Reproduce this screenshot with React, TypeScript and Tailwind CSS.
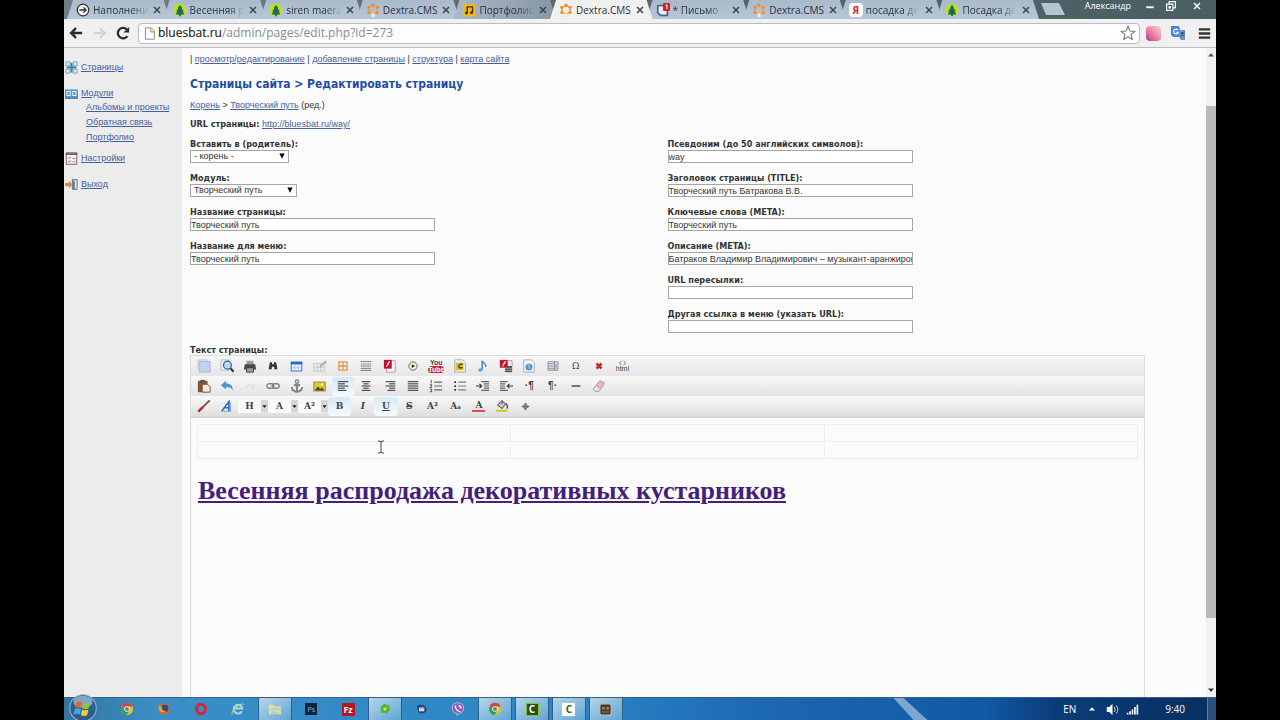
import { ReactNode } from "react";

const sans = "font-['Open_Sans','Noto_Sans',sans-serif]";
const cms = "font-['Liberation_Sans',sans-serif]";
const tahoma = "font-['DejaVu_Sans_Condensed','DejaVu_Sans',sans-serif] font-bold";

function Svg({ children, className = "size-[14px]" }: { children: ReactNode; className?: string }) {
    return (
        <svg viewBox="0 0 16 16" className={className} fill="none" aria-hidden="true">
            {children}
        </svg>
    );
}

/* ---------- favicons ---------- */

const arrowIcon = (
    <Svg>
        <circle cx="8" cy="8" r="6.6" fill="#f4f4f4" stroke="#333" strokeWidth="1.4" />
        <path d="M4 8h7M8.5 5l3 3-3 3" stroke="#333" strokeWidth="1.6" />
    </Svg>
);

const treeIcon = (
    <Svg>
        <circle cx="8" cy="8" r="7.2" fill="#c6e01e" />
        <path d="M8 2l3 4-1 .3 2.5 3.2-1.2.3L13 13H9v2H7v-2H3l1.700-3.200-1.200-.3L6 6.300 5 6z" fill="#1c7a3a" />
        <path d="M8 5l2 8H6z" fill="#1d5a8a" />
    </Svg>
);

const dextraIcon = (
    <Svg>
        <circle cx="8" cy="8" r="4.600" stroke="#f0a04a" strokeWidth="2" />
        <g fill="#ee8b2c">
            <circle cx="8" cy="2.500" r="1.800" />
            <circle cx="13" cy="5" r="1.700" />
            <circle cx="13" cy="11" r="1.700" />
            <circle cx="3" cy="11" r="1.700" />
            <circle cx="3" cy="5" r="1.700" />
        </g>
        <path d="M6 12h4v4H6z" fill="#f4e9dc" />
    </Svg>
);

const musicIcon = (
    <Svg>
        <rect x="1" y="1" width="14" height="14" rx="1" fill="#f0b91f" />
        <path d="M6 11.500V4.500h6v6" stroke="#3a2c05" strokeWidth="1.500" />
        <circle cx="5" cy="11.500" r="1.600" fill="#3a2c05" />
        <circle cx="11" cy="11" r="1.600" fill="#3a2c05" />
    </Svg>
);

const mailIcon = (
    <Svg>
        <path d="M2 3h11v11H5l-3-3z" fill="#eef2f8" stroke="#4c6690" strokeWidth="2" />
        <rect x="8" y="0" width="8" height="9" rx="1" fill="#e01b1b" />
        <path d="M12.500 2v5M12.500 2l-1.500 1" stroke="#fff" strokeWidth="1.200" />
    </Svg>
);

const yandexIcon = (
    <span className="grid size-[14px] shrink-0 place-items-center rounded-sm bg-white text-[10px] leading-none font-bold text-[#d8232a]">
        Я
    </span>
);

const tabs = [
    { title: "Наполнени", icon: arrowIcon, fade: true },
    { title: "Весенняя р", icon: treeIcon, fade: true },
    { title: "siren maera", icon: treeIcon, fade: true },
    { title: "Dextra.CMS", icon: dextraIcon },
    { title: "Портфолио", icon: musicIcon, fade: true, dim: true },
    { title: "Dextra.CMS", icon: dextraIcon, active: true },
    { title: "* Письмо -", icon: mailIcon, fade: true },
    { title: "Dextra.CMS", icon: dextraIcon },
    { title: "посадка де", icon: yandexIcon, fade: true },
    { title: "Посадка де", icon: treeIcon, fade: true },
];

function TabStrip() {
    return (
        <div className="flex h-[19px] shrink-0 bg-gradient-to-r from-[#6f7f86] via-[#55666d] to-[#4a5f63] pl-[6px]">
            <div role="tablist" className="grid w-[966px] shrink-0 grid-cols-10">
                {tabs.map((tab, i) => (
                    <div
                        key={i}
                        className={
                            "-mx-[3px] flex items-center pr-[9px] pl-[9px] [clip-path:polygon(6px_0,calc(100%-6px)_0,100%_100%,0_100%)] " +
                            (tab.active
                                ? "z-10 bg-[#f0f0f0]"
                                : tab.dim
                                  ? "bg-gradient-to-r from-[#a9b9c9] to-[#8796a5]"
                                  : "bg-gradient-to-b from-[#a9bacb] to-[#b7c7d8]")
                        }
                    >
                        <button role="tab" aria-selected={!!tab.active} className="flex flex-1 items-center gap-[3px] text-[10px] leading-[18px] whitespace-nowrap text-[#2d3239]">
                            {tab.icon}
                            <span className={tab.fade ? "[mask-image:linear-gradient(to_right,#000_70%,transparent)]" : ""}>{tab.title}</span>
                        </button>
                        <button aria-label="Закрыть вкладку">
                            <Svg className="size-[8px]">
                                <path d="M2 2l12 12M14 2L2 14" stroke="#3d444c" strokeWidth="3" />
                            </Svg>
                        </button>
                    </div>
                ))}
            </div>
            <button aria-label="Новая вкладка" className="mt-[3px] ml-[5px] h-[12px] w-[24px] shrink-0 bg-[#b3c5d3] [clip-path:polygon(0_0,18px_0,100%_100%,5px_100%)]" />
            <div className="flex h-[12px] flex-1 items-center justify-end text-white">
                <button className="mr-[14px] text-[9px] leading-[12px]">Александр</button>
                <div className="mr-[15px] flex items-center gap-[11px]">
                    <button aria-label="Свернуть">
                        <Svg className="size-[10px]"><path d="M2 10h12" stroke="#fff" strokeWidth="3" /></Svg>
                    </button>
                    <button aria-label="Окно">
                        <Svg className="size-[10px]">
                            <path d="M5 4V1h10v10h-3M1 5h10v10H1zM5 9h2v2H5z" stroke="#fff" strokeWidth="1.800" />
                        </Svg>
                    </button>
                    <button aria-label="Закрыть" className="ml-[6px]">
                        <Svg className="size-[8px]"><path d="M2 2l12 12M14 2L2 14" stroke="#fff" strokeWidth="3" /></Svg>
                    </button>
                </div>
            </div>
        </div>
    );
}

function AddressBar() {
    return (
        <div className="flex h-[29px] shrink-0 items-center border-b border-[#bdbdbd] bg-[#f0f0f0] pr-[5px] pl-[5px]">
            <button aria-label="Назад" className="mr-[10px]">
                <Svg><path d="M15 8H3M8 2.500L2.500 8 8 13.500" stroke="#2b2b2b" strokeWidth="2.800" /></Svg>
            </button>
            <button aria-label="Вперёд" disabled className="mr-[9px]">
                <Svg><path d="M1 8h12M8 2.500L13.500 8 8 13.500" stroke="#d3d3d3" strokeWidth="2.800" /></Svg>
            </button>
            <button aria-label="Обновить" className="mr-[8px]">
                <Svg>
                    <path d="M13 11.500A6 6 0 1 1 12.500 4" stroke="#2b2b2b" strokeWidth="2.600" />
                    <path d="M15 1v6.500H8.500z" fill="#2b2b2b" />
                </Svg>
            </button>
            <label className="flex h-[21px] flex-1 items-center rounded-sm border border-[#bcbcbc] bg-[#fdfdfd] pr-[3px] pl-[4px]">
                <Svg className="size-[13px]">
                    <path d="M3 1h7l4 4v10H3zM9.500 1.500V6H14" stroke="#8c8c8c" strokeWidth="1.200" />
                </Svg>
                <span className="relative ml-[2px] flex-1 text-[12px] leading-[18px]">
                    <input aria-label="Адрес" defaultValue="bluesbat.ru/admin/pages/edit.php?id=273" className="block w-full text-[#8b8b8b] outline-none" />
                    {/* the host part is drawn darker than the path */}
                    <span aria-hidden="true" className="pointer-events-none absolute top-0 left-0 text-[#333]">bluesbat.ru</span>
                </span>
                <Svg className="size-[16px]">
                    <path d="M8 1.500l2 4.500 4.800.4-3.600 3.200 1.100 4.800L8 11.800l-4.300 2.600 1.100-4.800L1.200 6.400 6 6z" stroke="#777" strokeWidth="1.100" />
                </Svg>
            </label>
            <span className="ml-[6px] size-[15px] rounded-sm bg-gradient-to-tr from-[#b4388e] via-[#ee86a8] to-[#fbd3c4]" />
            <Svg className="ml-[9px] size-[16px]">
                <path d="M1 1h8l3 11H3L1 10z" fill="#4b83d6" />
                <path d="M9 5h6v10h-4L9 12z" fill="#7193c4" />
                <path d="M8 5a2.400 2.400 0 1 0 .4 2.200H6.200" stroke="#fff" strokeWidth="1.100" />
                <path d="M10.500 8h4M12.500 7v1c0 2-1 3-2 3.500M11.500 9l2.500 2.500" stroke="#2e4a78" />
            </Svg>
            <button aria-label="Меню" className="ml-[12px]">
                <Svg className="size-[13px]"><path d="M1 3h14M1 8h14M1 13h14" stroke="#333" strokeWidth="2.800" /></Svg>
            </button>
        </div>
    );
}

/* ---------- CMS sidebar ---------- */

function SideItem({ icon, children }: { icon: ReactNode; children: string }) {
    return (
        <div className="flex h-[14px] items-center gap-[3px]">
            {icon}
            <a href="#" className="underline">{children}</a>
        </div>
    );
}

function Sidebar() {
    return (
        <nav className={`w-[118px] shrink-0 bg-[#ececec] pt-[12px] pl-px text-[9px] leading-[14px] text-[#4560a0] ${cms}`}>
            <SideItem
                icon={
                    <Svg className="size-[13px]">
                        <path d="M1 1h5v5H1zM10 1h5v5h-5zM1 10h5v5H1zM10 10h5v5h-5z" fill="#d4e6f0" stroke="#7a98a8" />
                        <path d="M8 2v12M2 8h12" stroke="#3286b4" strokeWidth="2.500" />
                    </Svg>
                }
            >
                Страницы
            </SideItem>
            <div className="mt-[12px]">
                <SideItem
                    icon={
                        <Svg className="size-[13px]">
                            <rect x="0" y="3" width="16" height="11" fill="#5596c8" />
                            <path d="M2.500 5.500h4v5h-4zM9.500 5.500h4v5h-4z" stroke="#e4f1fa" strokeWidth="1.300" />
                            <path d="M0 14h16" stroke="#35607f" />
                        </Svg>
                    }
                >
                    Модули
                </SideItem>
                <ul className="pl-[21px] leading-[15px]">
                    <li><a href="#" className="underline">Альбомы и проекты</a></li>
                    <li><a href="#" className="underline">Обратная связь</a></li>
                    <li><a href="#" className="underline">Портфолио</a></li>
                </ul>
            </div>
            <div className="mt-[6px]">
                <SideItem
                    icon={
                        <Svg className="size-[13px]">
                            <rect x="1.500" y="1" width="13" height="14" fill="#f7f2f0" stroke="#5b4f4f" />
                            <path d="M1 2.500h14" stroke="#5b4f4f" strokeWidth="2" />
                            <path d="M4 7l1 1 2-2M4 11.500l1 1 2-2" stroke="#c43a2a" strokeWidth="1.200" />
                            <path d="M9 8h4M9 12h4" stroke="#8a7d7d" />
                        </Svg>
                    }
                >
                    Настройки
                </SideItem>
            </div>
            <div className="mt-[12px]">
                <SideItem
                    icon={
                        <Svg className="size-[13px]">
                            <path d="M9 2h6v12H9z" fill="#d9e3ea" stroke="#52606c" />
                            <path d="M9 2l3 2v11l-3-2z" fill="#6b7a86" />
                            <path d="M0 6h5V3l4 5-4 5v-3H0z" fill="#e2863c" />
                        </Svg>
                    }
                >
                    Выход
                </SideItem>
            </div>
        </nav>
    );
}

/* ---------- page form ---------- */

function TextField({ id, label, value = "" }: { id: string; label: string; value?: string }) {
    return (
        <div>
            <label htmlFor={id} className={`block h-[12px] text-[#333] ${tahoma}`}>{label}</label>
            <input id={id} defaultValue={value} className="block h-[13px] w-[245px] border border-[#a5a5a5] bg-white leading-[11px] text-[#333] outline-none" />
        </div>
    );
}

function SelectField({ id, label, value, width }: { id: string; label: string; value: string; width: string }) {
    return (
        <div>
            <label htmlFor={id} className={`block h-[12px] text-[#333] ${tahoma}`}>{label}</label>
            <div className={`relative ${width}`}>
                <select id={id} className="block h-[13px] w-full appearance-none border border-[#a5a5a5] bg-white pl-[3px] leading-[11px] text-[#333]">
                    <option>{value}</option>
                </select>
                <Svg className="pointer-events-none absolute top-[3px] right-[4px] size-[6px]">
                    <path d="M1 1h14L8 15z" fill="#000" />
                </Svg>
            </div>
        </div>
    );
}

/* ---------- editor toolbar ---------- */

function lines(rows: [number, number][], color = "#555") {
    return (
        <Svg>
            {rows.map(([x1, x2], i) => (
                <path key={i} d={`M${x1} ${3 + i * 2.5}H${x2}`} stroke={color} strokeWidth="1.400" />
            ))}
        </Svg>
    );
}

const page = <path d="M2 1h9l3 3v11H2z" fill="#f5f7fa" stroke="#9aa5b5" />;

const flashIcon = (
    <Svg>
        <path d="M4 2h10v13H4z" fill="#fafafa" stroke="#c78a8a" />
        <rect x="1" y="1" width="9" height="10" fill="#c8102e" />
        <path d="M8 3C5.500 3 5.500 6 4 9M5 6h2" stroke="#fff" strokeWidth="1.200" />
    </Svg>
);

const rowOne: { name: string; icon: ReactNode }[] = [
    {
        name: "Макет",
        icon: (
            <Svg>
                <rect x="1" y="1" width="11" height="11" fill="#dbe6f6" stroke="#b9cae6" />
                <rect x="3" y="3" width="12" height="12" fill="#bfd2ee" stroke="#9db6dc" />
            </Svg>
        ),
    },
    {
        name: "Просмотр",
        icon: (
            <Svg>
                <path d="M1 1h9v12H1z" fill="#eef1f5" stroke="#b5bcc6" />
                <circle cx="8.500" cy="7" r="4.500" fill="#b8dbf2" stroke="#37618e" strokeWidth="1.400" />
                <path d="M12 10.500l3.500 4" stroke="#2c3f5c" strokeWidth="2.400" />
            </Svg>
        ),
    },
    {
        name: "Печать",
        icon: (
            <Svg>
                <path d="M4 2h8v5H4z" fill="#9a9a9a" />
                <path d="M2 6h12l1 6H1z" fill="#4a4a4a" />
                <path d="M4 10h8v5H4z" fill="#8fa2ae" stroke="#333" />
            </Svg>
        ),
    },
    {
        name: "Найти",
        icon: (
            <Svg className="size-[10px]">
                <path d="M3 2h3.500v3h3V2H13l2 11h-5V9H6v4H1z" fill="#333" />
            </Svg>
        ),
    },
    {
        name: "Таблица",
        icon: (
            <Svg className="size-[13px]">
                <rect x="1.500" y="2.500" width="13" height="11" fill="#f2f7ff" stroke="#3b76cf" strokeWidth="1.300" />
                <path d="M1 4h14" stroke="#2f68c4" strokeWidth="3" />
                <path d="M6 6v7M10 6v7M2 9.500h12" stroke="#9abbe8" />
            </Svg>
        ),
    },
    {
        name: "Свойства таблицы",
        icon: (
            <Svg>
                <path d="M1 5h12v9H1zM5 5v9M9 5v9M1 9.500h12" stroke="#c4c4c4" />
                <path d="M8 9l6-6 1.500 1.500" stroke="#aaa" strokeWidth="1.800" />
            </Svg>
        ),
    },
    { name: "Границы", icon: <Svg className="size-[12px]"><path d="M2.500 2.500h11v11h-11zM8 2v12M2 8h12" stroke="#dd9a48" strokeWidth="1.700" /></Svg> },
    {
        name: "Разрыв страницы",
        icon: (
            <Svg className="size-[12px]">
                <path d="M1 2h14M1 14h14M1 11.500h14" stroke="#777" strokeWidth="1.200" />
                <path d="M2 5h3v4H2zM6.500 5h3v4h-3zM11 5h3v4h-3z" stroke="#8a8a8a" />
            </Svg>
        ),
    },
    { name: "Flash", icon: flashIcon },
    {
        name: "Видео",
        icon: (
            <Svg className="size-[12px]">
                <circle cx="8" cy="8" r="5.500" fill="#f3f0d8" stroke="#6b6b5a" strokeWidth="1.300" />
                <path d="M6.500 5.500l4 2.500-4 2.500z" fill="#222" />
            </Svg>
        ),
    },
    {
        name: "YouTube",
        icon: (
            <span className="flex flex-col items-center text-[7px] leading-[6px] font-bold text-[#444]">
                <span>You</span>
                <span className="rounded-sm bg-[#cc2a2f] leading-[7px] text-white">Tube</span>
            </span>
        ),
    },
    {
        name: "Изображение",
        icon: (
            <Svg>
                {page}
                <rect x="3" y="4" width="9" height="9" fill="#d9c22b" />
                <path d="M11 6c-4-1-5 2-4 4h4" stroke="#4c4514" strokeWidth="1.500" />
            </Svg>
        ),
    },
    {
        name: "Музыка",
        icon: (
            <Svg>
                <path d="M7 12V2c1 3 5 3 4 7" stroke="#3f87c8" strokeWidth="1.700" />
                <ellipse cx="5" cy="12.500" rx="2.600" ry="2" fill="#5da2dc" />
            </Svg>
        ),
    },
    {
        name: "Медиа",
        icon: (
            <Svg>
                <rect x="1" y="1" width="9" height="9" fill="#c8102e" />
                <path d="M8 3C5.500 3 5.500 6 4 8.500M5 5.500h2" stroke="#fff" strokeWidth="1.200" />
                <path d="M10 2h5v6" stroke="#999" />
                <rect x="7" y="8" width="8" height="7" fill="#5b4545" />
                <path d="M7 10.500h8M7 13h8" stroke="#b9a5a5" />
            </Svg>
        ),
    },
    {
        name: "Веб-страница",
        icon: (
            <Svg>
                {page}
                <circle cx="8" cy="9" r="4" fill="#4d94cf" />
                <path d="M6 7c2-1 3 0 2 2s2 1 2 2" stroke="#cfe7b5" />
            </Svg>
        ),
    },
    {
        name: "Шаблон",
        icon: (
            <Svg className="size-[12px]">
                <path d="M1.500 2.500h13v11h-13zM10 2v12M2 5h7M2 8h7M2 11h7" stroke="#7d8294" strokeWidth="1.200" />
                <path d="M12 5v7" stroke="#9aa6ca" strokeWidth="2" />
            </Svg>
        ),
    },
    { name: "Символ", icon: <span className="font-['DejaVu_Serif',serif] text-[9px] text-[#444]">Ω</span> },
    { name: "Очистить", icon: <Svg className="size-[8px]"><path d="M3 3l10 10M13 3L3 13" stroke="#c02a35" strokeWidth="5" /></Svg> },
    {
        name: "Исходный код",
        icon: (
            <span className="flex flex-col items-center text-[7px] leading-[6px] text-[#444]">
                <Svg className="h-[6px] w-[9px]"><path d="M5 2L0 8l5 6M11 2l5 6-5 6" stroke="#555" strokeWidth="2" /></Svg>
                <span>html</span>
            </span>
        ),
    },
];

const rowTwo: { name: string; icon: ReactNode; on?: boolean }[] = [
    {
        name: "Вставить",
        icon: (
            <Svg>
                <rect x="1" y="2" width="11" height="13" rx="1" fill="#8a5334" />
                <rect x="4" y="1" width="5" height="3" fill="#555" />
                <path d="M6 6h6l3 3v6H6z" fill="#f3ede6" stroke="#6f4a35" />
            </Svg>
        ),
    },
    {
        name: "Отменить",
        icon: (
            <Svg>
                <path d="M1 7l6-5v3c5 0 8 3 7.500 8C13 10 11 9 7 9v3z" fill="#4c96cc" />
            </Svg>
        ),
    },
    { name: "Повторить", icon: <Svg><path d="M3 11c1-4 5-5 8-3M12 6v4H8.500" stroke="#dcdcdc" strokeWidth="1.600" /></Svg> },
    {
        name: "Ссылка",
        icon: (
            <Svg>
                <rect x="1" y="5.500" width="8" height="5" rx="2.500" stroke="#858585" strokeWidth="1.700" />
                <rect x="7" y="5.500" width="8" height="5" rx="2.500" stroke="#858585" strokeWidth="1.700" />
            </Svg>
        ),
    },
    {
        name: "Якорь",
        icon: (
            <Svg>
                <circle cx="8" cy="3" r="1.800" stroke="#858585" strokeWidth="1.600" />
                <path d="M8 5v9M4.500 7h7M2 9c0 4 4 5.500 6 5.500S14 13 14 9" stroke="#858585" strokeWidth="2.300" />
            </Svg>
        ),
    },
    {
        name: "Картинка",
        icon: (
            <Svg className="size-[13px]">
                <rect x="1" y="2.500" width="14" height="11" fill="#e3c72c" stroke="#8a7d38" />
                <path d="M2 13l4-5 3 3 2-2 3 4z" fill="#4f4a22" />
                <circle cx="11" cy="5.500" r="1.500" fill="#fff7c5" />
            </Svg>
        ),
    },
    { name: "По левому краю", icon: lines([[2, 14], [2, 10], [2, 14], [2, 10], [2, 12]]), on: true },
    { name: "По центру", icon: lines([[3, 13], [5, 11], [3, 13], [5, 11], [3, 13]]) },
    { name: "По правому краю", icon: lines([[3, 14], [7, 14], [3, 14], [7, 14], [5, 14]]) },
    { name: "По ширине", icon: lines([[2, 14], [2, 14], [2, 14], [2, 14], [2, 14]]) },
    {
        name: "Нумерованный список",
        icon: (
            <Svg>
                <path d="M6 3.500h9M6 8h9M6 12.500h9" stroke="#666" strokeWidth="1.300" />
                <path d="M2.500 1v4M1 6.500h2v1.500l-2 1.500h2.500M1 11.500h2v3H1" stroke="#444" />
            </Svg>
        ),
    },
    {
        name: "Маркированный список",
        icon: (
            <Svg>
                <path d="M6 3.500h9M6 8h9M6 12.500h9" stroke="#7a7a94" strokeWidth="1.300" />
                <path d="M1.500 2.500h2v2h-2zM1.500 7h2v2h-2zM1.500 11.500h2v2h-2z" fill="#333" />
            </Svg>
        ),
    },
    { name: "Увеличить отступ", icon: <Svg><path d="M6 3h9M9 5.500h6M9 8h6M9 10.500h6M6 13h9" stroke="#666" strokeWidth="1.300" /><path d="M0 8h6M4 5.500L6.500 8 4 10.500" stroke="#333" strokeWidth="1.300" /></Svg> },
    { name: "Уменьшить отступ", icon: <Svg><path d="M1 3h9M1 5.500h6M1 8h6M1 10.500h6M1 13h9" stroke="#666" strokeWidth="1.300" /><path d="M10 8h6M12 5.500L9.500 8l2.500 2.500" stroke="#333" strokeWidth="1.300" /></Svg> },
    { name: "Слева направо", icon: <span className="text-[10px] font-bold text-[#444]">·¶</span> },
    { name: "Справа налево", icon: <span className="text-[10px] font-bold text-[#444]">¶·</span> },
    { name: "Линия", icon: <Svg><path d="M3 8h10" stroke="#333" strokeWidth="1.500" /></Svg> },
    {
        name: "Ластик",
        icon: (
            <Svg>
                <path d="M1.500 11L9 2l5.500 2.500L8 14H3.500z" fill="#efb5b5" stroke="#b98d8d" />
                <path d="M1.500 11l3-3.500L10 11l-2 3H3.500z" fill="#e3e3ea" stroke="#a6a6b4" />
            </Svg>
        ),
    },
];

const serif = "font-['DejaVu_Serif',serif] text-[9px] leading-none text-[#444]";

const rowThree: { name: string; icon: ReactNode; on?: boolean }[] = [
    { name: "Полужирный", icon: <b className={serif}>B</b>, on: true },
    { name: "Курсив", icon: <i className={`${serif} font-bold`}>I</i> },
    { name: "Подчёркнутый", icon: <span className={`${serif} font-bold underline`}>U</span>, on: true },
    { name: "Зачёркнутый", icon: <span className={`${serif} font-bold line-through`}>S</span> },
    { name: "Верхний индекс", icon: <span className={`${serif} font-bold`}>A²</span> },
    { name: "Регистр", icon: <span className={`${serif} font-bold`}>Aₐ</span> },
    { name: "Цвет текста", icon: <span className={`${serif} border-b-2 border-[#e04a6a] px-[3px] font-bold`}>A</span> },
    {
        name: "Цвет фона",
        icon: (
            <Svg>
                <path d="M3 7l5-5 4 4-4 5zM8 1v5" fill="#c9c9c9" stroke="#666" strokeWidth="1.200" />
                <path d="M12 5c2 1 2.500 3 2 6" stroke="#555" strokeWidth="1.800" />
                <path d="M1 13.500h13" stroke="#cfd02a" strokeWidth="2.600" />
            </Svg>
        ),
    },
    {
        name: "Ещё",
        icon: (
            <Svg className="size-[9px]">
                <path d="M8 1l3 4H9v2h2V5l4 3-4 3V9H9v2h2l-3 4-3-4h2V9H5v2L1 8l4-3v2h2V5H5z" fill="#666" />
                <circle cx="8" cy="8" r="3" fill="#777" />
            </Svg>
        ),
    },
];

function Tool({ name, icon, on }: { name: string; icon: ReactNode; on?: boolean }) {
    return (
        <button
            aria-label={name}
            className={"flex h-[19px] items-center justify-center rounded-sm " + (on ? "bg-gradient-to-b from-[#d3eaf5] to-[#f5fafc]" : "")}
        >
            {icon}
        </button>
    );
}

function SplitTool({ name, children }: { name: string; children: string }) {
    return (
        <div className="flex w-[30px] items-center">
            <button aria-label={name} className={`grid h-[13px] flex-1 place-items-center bg-[#fafafa] font-bold ${serif}`}>{children}</button>
            <button aria-label={`${name}: варианты`} className="grid h-[12px] w-[7px] place-items-center bg-[#d6d6d6]">
                <Svg className="size-[5px]"><path d="M1 4h14l-7 9z" fill="#222" /></Svg>
            </button>
        </div>
    );
}

function Toolbar() {
    const row = "flex h-[20px] items-center bg-gradient-to-b pl-px";
    return (
        <div className="border-b-2 border-[#d6d6d6]">
            <div className={`${row} from-[#f7f7f7] to-[#e6e6e6]`}>
                <div className="grid w-[442px] grid-cols-19">
                    {rowOne.map((t) => <Tool key={t.name} {...t} />)}
                </div>
            </div>
            <div className={`${row} from-[#f9f9f9] to-[#e3e3e3]`}>
                <div className="grid w-[442px] grid-cols-19">
                    {rowTwo.map((t) => <Tool key={t.name} {...t} />)}
                </div>
            </div>
            <div className={`${row} from-[#f9f9f9] to-[#dfdfdf]`}>
                <div className="grid w-[46px] grid-cols-2">
                    <Tool
                        name="Кисть"
                        icon={
                            <Svg>
                                <path d="M14.500 1.500L7 9" stroke="#7a4a4a" strokeWidth="2" />
                                <path d="M7 9l-5.500 5.500" stroke="#b02a35" strokeWidth="2.800" />
                            </Svg>
                        }
                    />
                    <Tool
                        name="Стили"
                        icon={
                            <Svg className="size-[13px]">
                                <path d="M2 14L11 2v12M6 9.500h5" stroke="#2f66b8" strokeWidth="2" />
                                <path d="M13 3v11H4" stroke="#8fb3e0" strokeWidth="1.500" />
                            </Svg>
                        }
                    />
                </div>
                <SplitTool name="Заголовок">H</SplitTool>
                <SplitTool name="Шрифт">A</SplitTool>
                <SplitTool name="Размер">A²</SplitTool>
                <div className="grid w-[209px] grid-cols-9">
                    {rowThree.map((t) => <Tool key={t.name} {...t} />)}
                </div>
            </div>
        </div>
    );
}

function Editor() {
    return (
        <div className="flex flex-1 flex-col border border-b-0 border-[#dadada]">
            <Toolbar />
            <div className="relative flex-1 px-[6px] pt-[6px]">
                <table className="w-full table-fixed border-collapse">
                    <tbody>
                        {[0, 1].map((r) => (
                            <tr key={r} className="h-[17px]">
                                {[0, 1, 2].map((c) => <td key={c} className="border border-[#eeeeee]" />)}
                            </tr>
                        ))}
                    </tbody>
                </table>
                <h1 className="mt-[16px] pl-px font-['Liberation_Serif',serif] text-[26px] leading-[32px] font-bold text-[#43217a]">
                    <a href="#" className="underline">Весенняя распродажа декоративных кустарников</a>
                </h1>
                {/* text cursor */}
                <svg viewBox="0 0 8 14" className="pointer-events-none absolute top-[22px] left-[186px] h-[14px] w-[8px]" fill="none">
                    <path d="M1 1h2l1 1 1-1h2M4 2v10M1 13h2l1-1 1 1h2" stroke="#444" />
                </svg>
            </div>
        </div>
    );
}

function PageForm() {
    return (
        <main className={`flex min-w-0 flex-1 flex-col bg-[#fbfbfb] pt-[5px] pr-[61px] pl-[8px] text-[9px] leading-[12px] text-[#333] ${cms}`}>
            <nav className="text-[#4560a0]">
                <span className="text-[#333]">| </span><a href="#" className="underline">просмотр/редактирование</a>
                <span className="text-[#333]"> | </span><a href="#" className="underline">добавление страницы</a>
                <span className="text-[#333]"> | </span><a href="#" className="underline">структура</a>
                <span className="text-[#333]"> | </span><a href="#" className="underline">карта сайта</a>
            </nav>
            <h1 className={`mt-[11px] text-[12px] leading-[16px] text-[#1f4ea3] ${tahoma}`}>Страницы сайта &gt; Редактировать страницу</h1>
            <p className="mt-[7px]">
                <a href="#" className="text-[#4560a0] underline">Корень</a> &gt; <a href="#" className="text-[#4560a0] underline">Творческий путь</a> (ред.)
            </p>
            <p className="mt-[7px] h-[12px]">
                <b className={tahoma}>URL страницы:</b> <a href="#" className="text-[#4560a0] underline">http://bluesbat.ru/way/</a>
            </p>
            <form className="mt-[8px] grid grid-cols-2">
                <div className="flex flex-col gap-[9px]">
                    <SelectField id="parent" label="Вставить в (родитель):" value="- корень -" width="w-[99px]" />
                    <SelectField id="module" label="Модуль:" value="Творческий путь" width="w-[107px]" />
                    <TextField id="name" label="Название страницы:" value="Творческий путь" />
                    <TextField id="menu" label="Название для меню:" value="Творческий путь" />
                </div>
                <div className="flex flex-col gap-[9px]">
                    <TextField id="alias" label="Псевдоним (до 50 английских символов):" value="way" />
                    <TextField id="title" label="Заголовок страницы (TITLE):" value="Творческий путь Батракова В.В." />
                    <TextField id="keywords" label="Ключевые слова (META):" value="Творческий путь" />
                    <TextField id="description" label="Описание (META):" value="Батраков Владимир Владимирович – музыкант-аранжировщик" />
                    <TextField id="redirect" label="URL пересылки:" />
                    <TextField id="link" label="Другая ссылка в меню (указать URL):" />
                </div>
            </form>
            <p className={`mt-[11px] h-[11px] ${tahoma}`}>Текст страницы:</p>
            <Editor />
        </main>
    );
}

function Scrollbar() {
    return (
        <div className="flex w-[10px] shrink-0 flex-col items-center bg-[#f1f1f1] py-[4px]">
            <Svg className="size-[6px]"><path d="M0 12h16L8 3z" fill="#555" /></Svg>
            <div className="grow-[48]" />
            <div className="w-full grow-[512] bg-[#b9b9b9]" />
            <div className="grow-[69]" />
            <Svg className="size-[6px]"><path d="M0 4h16L8 13z" fill="#333" /></Svg>
        </div>
    );
}

/* ---------- Windows taskbar ---------- */

const chromeLogo = (
    <Svg>
        <circle cx="8" cy="8" r="7" fill="#e0c22f" />
        <path d="M8 8L2 4.500A7 7 0 0 1 14.500 5H8z" fill="#d8463a" />
        <path d="M8 8L2 4.500A7 7 0 0 0 7.500 15L11 9.500z" fill="#3f9e4d" />
        <circle cx="8" cy="8" r="3.200" fill="#f4f4f4" />
        <circle cx="8" cy="8" r="2.300" fill="#4a86d0" />
    </Svg>
);

const apps: { name: string; icon: ReactNode; open?: boolean }[] = [
    { name: "Chrome", icon: chromeLogo },
    {
        name: "Firefox",
        icon: (
            <Svg>
                <circle cx="8" cy="8" r="6.500" fill="#d9641d" />
                <circle cx="9" cy="7" r="4" fill="#2c4c8c" />
                <path d="M2 4c2 0 3 2 4 2.500-1 2 1 4 4 3.500-2 3-7 2-8-2z" fill="#f0a033" />
            </Svg>
        ),
    },
    { name: "Opera", icon: <Svg><ellipse cx="8" cy="8" rx="5" ry="5.500" stroke="#d6253a" strokeWidth="3.500" /></Svg> },
    {
        name: "Internet Explorer",
        icon: (
            <Svg>
                <path d="M12.500 10.500A5 5 0 1 1 13 7.500H4" stroke="#9fdcf5" strokeWidth="2.200" />
                <path d="M1.500 14C0 11 9 1 15 2.500" stroke="#d9c75a" strokeWidth="1.200" />
            </Svg>
        ),
    },
    {
        name: "Проводник",
        open: true,
        icon: (
            <Svg>
                <path d="M1 3h5l1 2h8v9H1z" fill="#e3dc98" />
                <path d="M3 7h12v2H3zM4 11h8v3H4z" fill="#a9cfd2" />
            </Svg>
        ),
    },
    { name: "Photoshop", icon: <span className="grid size-[12px] place-items-center bg-[#0d2238] text-[7px] leading-none text-[#7fc4ea]">Ps</span> },
    { name: "FileZilla", icon: <span className="grid size-[13px] place-items-center bg-[#b3161d] text-[9px] leading-none font-bold text-white">Fz</span> },
    {
        name: "ICQ",
        open: true,
        icon: (
            <Svg className="size-[12px]">
                <path d="M8 1l3 2h3v4l1 2-3 3-2 2-3-1-4 0-1-4 1-5z" fill="#4fb63c" />
                <circle cx="8" cy="8" r="2.300" fill="#f3d13d" />
            </Svg>
        ),
    },
    {
        name: "Thunderbird",
        icon: (
            <Svg className="size-[12px]">
                <path d="M1 4c4-3 13-2 13 5 0 5-8 6-11 3z" fill="#24407a" />
                <path d="M4 6h7v5H4z" fill="#e8edf4" />
                <path d="M4 6l3.500 3L11 6" stroke="#6a7890" />
            </Svg>
        ),
    },
    {
        name: "Viber",
        icon: (
            <Svg>
                <path d="M8 1c5 0 6.500 2 6.500 6S12 13 9 13l-2 2.500V13C3 12.500 1.500 11 1.500 7S3 1 8 1z" fill="#8660b4" stroke="#cdbce2" />
                <path d="M5 4c-.5 4 3 7 6 7M8.500 4c2 .3 3 1.500 3 3.500" stroke="#f4eefa" strokeWidth="1.600" />
            </Svg>
        ),
    },
    { name: "Google Chrome", icon: chromeLogo, open: true },
    { name: "Camtasia", icon: <span className="grid size-[13px] place-items-center border border-[#8cb92c] bg-[#2b4d17] text-[10px] leading-none font-bold text-white">C</span>, open: true },
    { name: "Camtasia Recorder", icon: <span className="grid size-[13px] place-items-center bg-white text-[10px] leading-none font-bold text-[#31591c]">C</span>, open: true },
    {
        name: "Захват",
        open: true,
        icon: (
            <Svg className="size-[13px]">
                <rect x="1" y="1" width="14" height="14" rx="2" fill="#4b3a33" stroke="#c3bcb5" strokeWidth="1.500" />
                <path d="M4 5h3v3H4zM9 5h3v3H9z" fill="#a48572" />
                <path d="M4 11h8" stroke="#8e7464" strokeWidth="1.500" />
            </Svg>
        ),
    },
];

function Taskbar() {
    return (
        <footer className="relative flex h-[23px] shrink-0 items-center border-t border-[#38608a] bg-[linear-gradient(to_right,#35749f_0%,#3a8fc5_8%,#2a84c5_45%,#1c66b0_62%,#1159a6_80%,#0b3c79_86%,#082e60_100%)] text-white">
            {/* light streak of the wallpaper */}
            <span className="absolute inset-y-0 left-[72%] w-[34px] bg-[#7ba6d4] [clip-path:polygon(0_0,10px_0,100%_100%,20px_100%)]" />
            <button aria-label="Пуск" className="relative -mt-[2px] ml-[5px] size-[28px] shrink-0">
                <Svg className="size-full">
                    <circle cx="8" cy="8" r="7.600" fill="#2d5f8c" stroke="#8db4d2" strokeWidth=".6" />
                    <ellipse cx="8" cy="4.500" rx="5.500" ry="3.500" fill="#7fa9c8" />
                    <path d="M4 4.800c1.200-.8 2.400-.7 3.600 0L7 8c-1.200-.7-2.400-.7-3.600 0z" fill="#e5662c" />
                    <path d="M8.200 5c1.200.7 2.400.7 3.800 0l-.8 3.200c-1.200.7-2.400.7-3.600 0z" fill="#8cc63e" />
                    <path d="M3.300 8.600c1.200-.7 2.400-.7 3.600 0l-.7 3.200c-1.200-.7-2.400-.7-3.600 0z" fill="#4aa5e0" />
                    <path d="M7.500 8.800c1.200.7 2.400.7 3.600 0l-.7 3.200c-1.200.7-2.400.7-3.600 0z" fill="#f3cc3a" />
                </Svg>
            </button>
            <div className="ml-[12px] grid w-[515px] shrink-0 grid-cols-14 justify-items-center">
                {apps.map((app) => (
                    <button
                        key={app.name}
                        aria-label={app.name}
                        className={
                            "grid h-[22px] w-[34px] place-items-center " +
                            (app.open ? "border-x border-[#2d5f88] bg-gradient-to-br from-[#b4d6ea] to-[#5fa5d2]" : "")
                        }
                    >
                        {app.icon}
                    </button>
                ))}
            </div>
            <div className="flex flex-1 items-center justify-end text-[10px] leading-none">
                <span className="mr-[13px]">EN</span>
                <Svg className="mr-[11px] size-[6px]"><path d="M0 12h16L8 3z" fill="#fff" /></Svg>
                <Svg className="mr-[7px] size-[13px]">
                    <path d="M1 5h3l4-4v14l-4-4H1z" fill="#fff" />
                    <path d="M10 5c1.500 2 1.500 4 0 6M12.500 3c2.500 3 2.500 7 0 10" stroke="#dfe8f2" strokeWidth="1.200" />
                </Svg>
                <Svg className="mr-[26px] size-[13px]">
                    <path d="M1 12h2v2H1zM4 10h2v4H4zM7 8h2v6H7zM10 5h2v9h-2zM13 2h2v12h-2z" fill="#fff" />
                </Svg>
                <span className="mr-[22px]">9:40</span>
                <button aria-label="Показать рабочий стол" className="h-[22px] w-[9px] border-l border-[#5c7da3] bg-[#2b4e7c]" />
            </div>
        </footer>
    );
}

export default function App() {
    return (
        <div className={`min-h-screen bg-black px-[5%] ${sans}`}>
            <div className="flex min-h-screen flex-col">
                <TabStrip />
                <AddressBar />
                <div className="flex flex-1">
                    <Sidebar />
                    <PageForm />
                    <Scrollbar />
                </div>
                <Taskbar />
            </div>
        </div>
    );
}
